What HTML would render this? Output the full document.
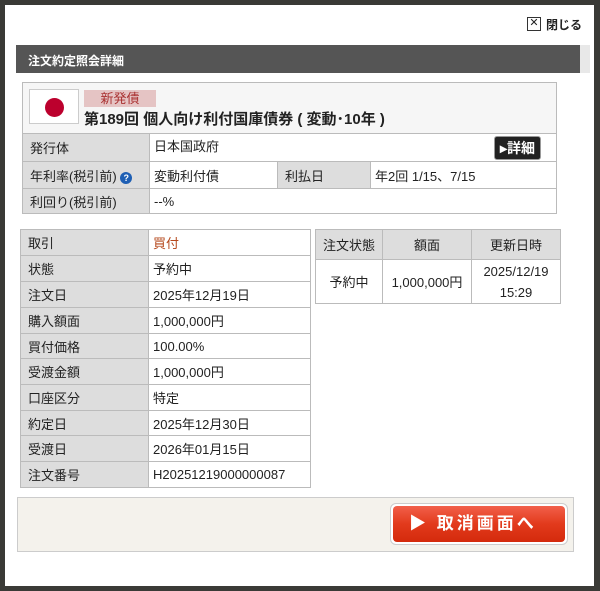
<!DOCTYPE html>
<html><head><meta charset="utf-8"><style>
*{box-sizing:border-box;margin:0;padding:0}
body{width:600px;height:591px;background:#3a3a36;font-family:"Liberation Sans","Noto Sans CJK JP",sans-serif;font-size:13px;color:#222;position:relative;overflow:hidden}
.modal{position:absolute;left:5px;top:5px;width:589px;height:581px;background:#fff}
.abs{position:absolute}
table{border-collapse:collapse;position:absolute}
td,th{border:1px solid #bbb;padding:0 4px;font-weight:normal;text-align:left}
.l{background:#ddd;padding-left:7px}
</style></head><body>
<div class="modal"></div>
<div class="abs" style="left:527px;top:17px;width:14px;height:14px;border:1px solid #333;font-size:11px;line-height:11px;text-align:center">✕</div>
<div class="abs" style="left:546px;top:16px;font-weight:bold;font-size:12px">閉じる</div>
<div class="abs" style="left:16px;top:45px;width:564px;height:28px;background:#555;color:#fff;font-weight:bold;font-size:12px;padding:7px 0 0 12px">注文約定照会詳細</div>
<div class="abs" style="left:580px;top:45px;width:10px;height:28px;background:#e8e8e8"></div>
<div class="abs" style="left:22px;top:82px;width:535px;height:131px;border:1px solid #bbb;background:#f6f6f6"></div>
<div class="abs" style="left:29px;top:89px;width:50px;height:35px;border:1px solid #ccc;background:#fff"><div style="position:absolute;left:15px;top:8px;width:19px;height:19px;border-radius:50%;background:#bc002d"></div></div>
<div class="abs" style="left:84px;top:90px;width:72px;height:17px;background:#e5c4c4;color:#a33;text-align:center;line-height:17px">新発債</div>
<div class="abs" style="left:84px;top:108px;font-weight:bold;font-size:15px">第189回 個人向け利付国庫債券 ( 変動･10年 )</div>
<table style="left:22px;top:133px;width:535px">
<tr style="height:28px"><td class="l" style="width:127px">発行体</td><td colspan="3" style="background:#fff">日本国政府<span style="float:right;background:#222;color:#fff;font-weight:bold;font-size:14px;padding:1px 5px;border-radius:3px;border:1px solid #999;margin-right:11px">▸詳細</span></td></tr>
<tr style="height:27px"><td class="l">年利率(税引前) <span style="display:inline-block;width:12px;height:12px;border-radius:50%;background:#1e5fb4;color:#fff;font-size:9px;text-align:center;line-height:12px;font-weight:bold">?</span></td><td style="background:#fff;width:128px">変動利付債</td><td class="l" style="width:93px">利払日</td><td style="background:#fff">年2回 1/15、7/15</td></tr>
<tr style="height:25px"><td class="l">利回り(税引前)</td><td colspan="3" style="background:#fff">--%</td></tr>
</table>
<table style="left:20px;top:229px;width:291px">
<tr style="height:26px"><td class="l" style="width:128px">取引</td><td style="color:#b5481c">買付</td></tr>
<tr style="height:26px"><td class="l">状態</td><td>予約中</td></tr>
<tr style="height:26px"><td class="l">注文日</td><td>2025年12月19日</td></tr>
<tr style="height:26px"><td class="l">購入額面</td><td>1,000,000円</td></tr>
<tr style="height:25px"><td class="l">買付価格</td><td>100.00%</td></tr>
<tr style="height:26px"><td class="l">受渡金額</td><td>1,000,000円</td></tr>
<tr style="height:26px"><td class="l">口座区分</td><td>特定</td></tr>
<tr style="height:25px"><td class="l">約定日</td><td>2025年12月30日</td></tr>
<tr style="height:26px"><td class="l">受渡日</td><td>2026年01月15日</td></tr>
<tr style="height:26px"><td class="l">注文番号</td><td>H20251219000000087</td></tr>
</table>
<table style="left:315px;top:229px;width:246px;text-align:center">
<tr style="height:30px"><th class="l" style="width:67px;text-align:center;padding:0">注文状態</th><th class="l" style="width:89px;text-align:center;padding:0">額面</th><th class="l" style="text-align:center;padding:0">更新日時</th></tr>
<tr style="height:44px"><td style="text-align:center;padding:0">予約中</td><td style="text-align:center;padding:0">1,000,000円</td><td style="text-align:center;line-height:21px;padding:0">2025/12/19<br>15:29</td></tr>
</table>
<div class="abs" style="left:17px;top:497px;width:557px;height:55px;background:#f4f2ec;border:1px solid #ccc"></div>
<div class="abs" style="left:390px;top:503px;width:178px;height:42px;border:1px solid #ccc;border-radius:6px;padding:2px;background:#fff"><div style="height:100%;border-radius:4px;background:linear-gradient(#f2604a,#e23a1c 50%,#d42a0c);color:#fff;font-weight:bold;font-size:17px;letter-spacing:3px;line-height:36px;padding-left:16px">▶&nbsp;取消画面へ</div></div>
</body></html>
